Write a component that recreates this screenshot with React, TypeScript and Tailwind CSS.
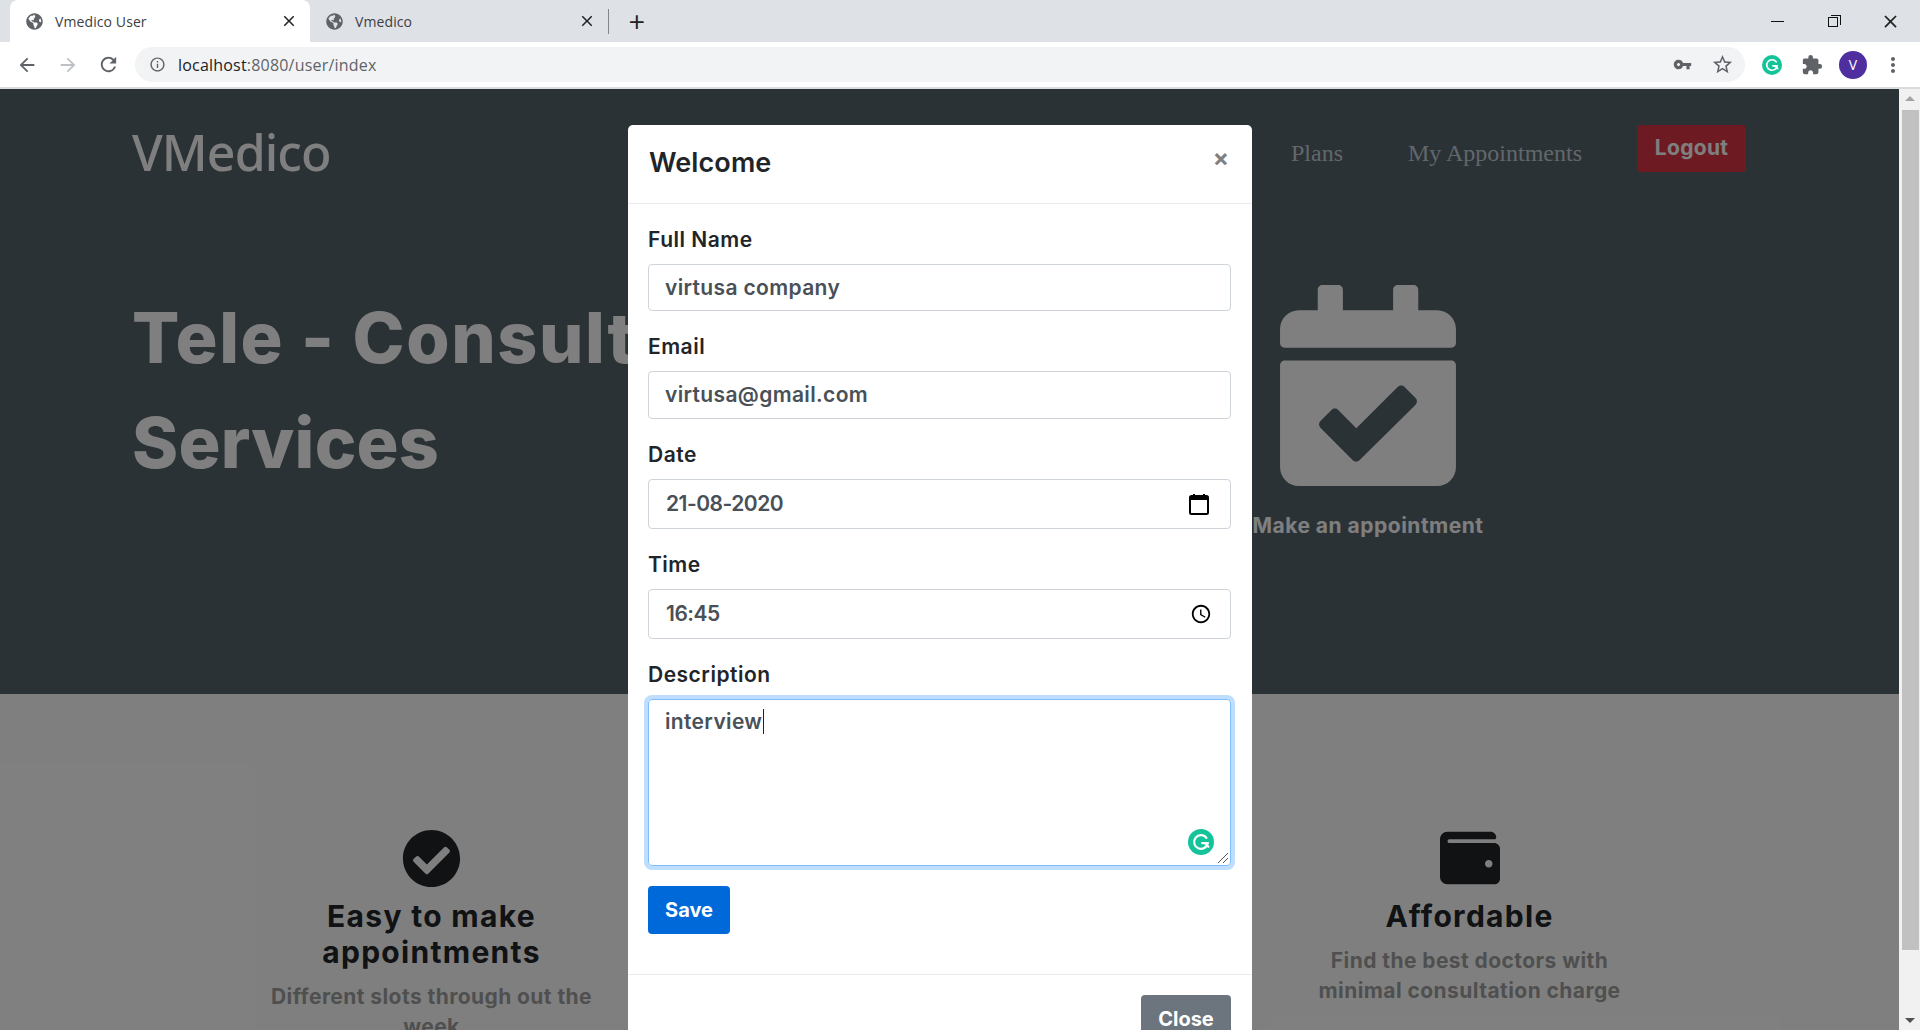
import React from "react";
import { FaCalendarCheck, FaCheckCircle, FaGlobeAmericas, FaWallet } from "react-icons/fa";
import {
  MdAccessTime,
  MdArrowBack,
  MdArrowForward,
  MdClose,
  MdExtension,
  MdInfoOutline,
  MdMoreVert,
  MdRefresh,
  MdStarBorder,
  MdVpnKey,
} from "react-icons/md";

function GrammarlyG({ size }: { size: number }) {
  return (
    <svg width={size} height={size} viewBox="0 0 24 24" className="shrink-0">
      <circle cx="12" cy="12" r="12" fill="#15c39a" />
      <path d="M17 8.2A6.3 6.3 0 1 0 18.2 13H13" fill="none" stroke="#fff" strokeWidth="2" strokeLinecap="round" />
      <path d="M15.6 13l3.2 3.4" fill="none" stroke="#fff" strokeWidth="2" strokeLinecap="round" />
    </svg>
  );
}

function Tab({ title, active, width }: { title: string; active?: boolean; width: string }) {
  return (
    <div className={`flex h-[42px] items-center pl-4 pr-3 ${width} ${active ? "rounded-t-lg bg-white" : ""}`}>
      <FaGlobeAmericas className="shrink-0 text-[17px] text-[#5f6368]" />
      <span className="ml-[12px] flex-1 font-['Open_Sans',sans-serif] text-[14px] tracking-[0.1px] text-[#3c4043]">{title}</span>
      <MdClose className="shrink-0 text-[18px] text-[#202124]" />
    </div>
  );
}

function BrowserChrome() {
  return (
    <div className="flex shrink-0 flex-col">
      <div className="flex h-[42px] items-center bg-[#dee1e6] pl-[10px]">
        <Tab title="Vmedico User" active width="w-[300px]" />
        <Tab title="Vmedico" width="w-[298px]" />
        <div className="h-[25px] w-px bg-[#80868b]" />
        <span className="mt-[-2px] ml-[18px] text-[30px] leading-none font-light text-[#202124]">+</span>
        <div className="ml-auto flex items-center pr-[19px]">
          <div className="h-px w-[13px] bg-[#111]" />
          <div className="relative ml-[44px] h-[13px] w-[13px]">
            <div className="absolute top-[2px] left-0 h-[10px] w-[10px] border border-[#111] bg-[#dee1e6]" />
            <div className="absolute top-0 right-0 h-[10px] w-[10px] border-t border-r border-[#111]" />
          </div>
          <MdClose className="ml-[39px] text-[21px] font-light text-[#222]" />
        </div>
      </div>
      <div className="flex h-[47px] items-center border-b-2 border-[#dadce0] bg-white">
        <MdArrowBack className="ml-[16px] text-[22px] text-[#5f6368]" />
        <MdArrowForward className="ml-[19px] text-[22px] text-[#bdc1c6]" />
        <MdRefresh className="ml-[18px] text-[23px] text-[#5f6368]" />
        <div className="ml-[15px] flex h-[35px] w-[1610px] items-center rounded-full bg-[#f1f3f4] pl-[14px]">
          <MdInfoOutline className="text-[17px] text-[#5f6368]" />
          <span className="ml-[12px] font-['Open_Sans',sans-serif] text-[16px] tracking-[0.2px] text-[#202124]">
            localhost<span className="text-[#5f6368]">:8080/user/index</span>
          </span>
          <MdVpnKey className="ml-auto text-[19px] text-[#5f6368]" />
          <MdStarBorder className="mr-[11px] ml-[19px] text-[23px] text-[#5f6368]" />
        </div>
        <div className="ml-[17px]"><GrammarlyG size={20} /></div>
        <MdExtension className="ml-[19px] text-[22px] text-[#5f6368]" />
        <div className="ml-[16px] flex h-[28px] w-[28px] items-center justify-center rounded-full bg-[#4f2ea0] font-['Open_Sans',sans-serif] text-[14px] text-white">V</div>
        <MdMoreVert className="ml-[14px] text-[24px] text-[#5f6368]" />
      </div>
    </div>
  );
}

function Feature({ icon, title, text }: { icon: React.ReactNode; title: React.ReactNode; text: React.ReactNode }) {
  return (
    <div className="flex flex-col items-center pt-[134px] text-center">
      <div className="flex h-[60px] items-center">{icon}</div>
      <h3 className="mt-[10px] text-[30px] leading-[36px] font-bold tracking-[1.3px] whitespace-nowrap text-[#212529]">{title}</h3>
      <p className="mt-[12px] text-[21px] leading-[30px] font-bold tracking-[0.43px] whitespace-nowrap text-[#9f9f9f]">{text}</p>
    </div>
  );
}

function Page() {
  return (
    <div className="h-full flex-1 overflow-hidden bg-white">
      <section className="h-[605px] bg-[#56646c] pl-[132px] text-white">
        <div className="flex h-[126px] items-center">
          <span className="w-[1159px] shrink-0 font-['Noto_Sans',sans-serif] text-[50px] font-medium tracking-[-0.9px]">VMedico</span>
          <nav className="flex items-center font-['Liberation_Serif',serif] text-[24px] text-[#c4ced6]">
            <span className="mt-[1px]">Plans</span>
            <span className="mt-[1px] ml-[65px] whitespace-nowrap">My Appointments</span>
          </nav>
          <span className="mt-[-8px] ml-[55px] flex h-[47px] w-[109px] items-center justify-center rounded-[4px] bg-[#dc3545] text-[21px] font-bold tracking-[0.3px]">Logout</span>
        </div>
        <div className="flex">
          <h1 className="mt-[70px] w-[1100px] text-[70px] leading-[105px] font-extrabold tracking-[0.2px]">
            <span className="tracking-[1.6px]">Tele - Consultation</span>
            <br />
            Services
          </h1>
          <div className="mt-[70px] ml-[20px] flex w-[232px] flex-col items-center">
            <FaCalendarCheck className="h-[201px] w-[176px]" />
            <span className="mt-[27px] text-[21px] leading-[26px] font-bold tracking-[0.5px] whitespace-nowrap">Make an appointment</span>
          </div>
        </div>
      </section>
      <section className="grid grid-cols-3 pr-[170px] pl-[172px]">
        <Feature
          icon={<FaCheckCircle className="text-[59px] text-[#212529]" />}
          title={<>Easy to make<br />appointments</>}
          text={<>Different slots through out the<br />week</>}
        />
        <div />
        <Feature
          icon={<FaWallet className="text-[60px] text-[#212529]" />}
          title="Affordable"
          text={<>Find the best doctors with<br />minimal consultation charge</>}
        />
      </section>
    </div>
  );
}

function Field({ label, className, value, valueClass, icon }: { label: string; className: string; value: string; valueClass?: string; icon?: React.ReactNode }) {
  return (
    <div className="flex flex-col">
      <label className="h-[24px] text-[21px] leading-[26px] font-semibold tracking-[0.5px] text-[#212529]">{label}</label>
      <div className={`mt-[13px] flex items-center rounded-[4px] border border-[#ced4da] pr-[15px] pl-[15px] text-[21px] font-semibold tracking-[0.35px] text-[#495057] ${className}`}>
        <span className={valueClass}>{value}</span>
        {icon}
      </div>
    </div>
  );
}

function Modal() {
  return (
    <div className="absolute top-[36px] left-[628px] w-[624px] rounded-t-[5px] bg-white">
      <div className="flex h-[79px] items-start justify-between border-b border-[#e9ecef] pr-[23px] pl-[21px]">
        <h2 className="mt-[21px] text-[27px] leading-[34px] font-semibold tracking-[0.1px] text-[#212529]">Welcome</h2>
        <span className="mt-[18px] text-[24px] leading-[30px] font-bold text-[#808080]">×</span>
      </div>
      <div className="flex flex-col pt-[23px] pr-[21px] pb-[20px] pl-[20px]">
        <div className="flex flex-col gap-[23px]">
          <Field label="Full Name" className="h-[47px]" valueClass="ml-[1px]" value="virtusa company" />
          <Field label="Email" className="h-[48px]" valueClass="ml-[1px]" value="virtusa@gmail.com" />
          <Field
            label="Date"
            className="h-[50px]"
            valueClass="ml-[2px] tracking-[-0.5px]"
            value="21-08-2020"
            icon={
              <svg width="20" height="22" viewBox="0 0 20 22" className="mr-[6px] ml-auto">
                <path d="M5 1v3M15 1v3" stroke="#000" strokeWidth="2" />
                <rect x="1" y="3" width="18" height="18" rx="1.5" fill="none" stroke="#000" strokeWidth="2" />
                <rect x="1" y="3" width="18" height="4" fill="#000" />
              </svg>
            }
          />
          <Field label="Time" className="h-[50px]" valueClass="ml-[2px] tracking-[-0.5px]" value="16:45" icon={<MdAccessTime className="mr-[3px] ml-auto text-[22px] text-black" />} />
        </div>
        <label className="mt-[23px] h-[24px] text-[21px] leading-[26px] font-semibold tracking-[0.5px] text-[#212529]">Description</label>
        <div className="relative mt-[13px] h-[167px] rounded-[4px] border border-[#80bdff] pt-[7px] pr-[15px] pl-[16px] text-[21px] leading-[30px] font-semibold tracking-[0.35px] text-[#495057] shadow-[0_0_0_4px_#bfdeff]">
          <span className="border-r border-[#222] pr-px">interview</span>
          <div className="absolute right-[16px] bottom-[10px]"><GrammarlyG size={26} /></div>
          <svg width="12" height="12" viewBox="0 0 12 12" className="absolute right-[1px] bottom-[1px]">
            <path d="M1 11L11 1M6 11l5-5" stroke="#555" strokeWidth="1" />
          </svg>
        </div>
        <button className="mt-[20px] h-[48px] w-[82px] rounded-[4px] bg-[#0069d9] text-[20px] font-bold text-white">Save</button>
        <div className="mt-[40px] mr-[-21px] ml-[-20px] border-t border-[#e9ecef]" />
        <button className="mt-[20px] ml-auto h-[48px] w-[90px] rounded-[4px] bg-[#6c757d] text-[20px] font-bold text-white">Close</button>
      </div>
    </div>
  );
}

function Scrollbar() {
  return (
    <div className="relative flex h-full w-[21px] shrink-0 flex-col items-center bg-[#f1f1f1]">
      <div className="mt-[7px] h-0 w-0 border-x-[5px] border-b-[5px] border-x-transparent border-b-[#a3a3a3]" />
      <div className="mt-[9px] ml-[1px] h-[840px] w-[17px] bg-[#c1c1c1]" />
      <div className="mt-auto mb-[7px] h-0 w-0 border-x-[5px] border-t-[5px] border-x-transparent border-t-[#505050]" />
    </div>
  );
}

export default function App() {
  return (
    <div className="flex h-[1030px] w-[1920px] flex-col overflow-hidden bg-white font-['Inter',sans-serif]">
      <BrowserChrome />
      <div className="flex h-[941px] min-h-0">
        <div className="relative h-full flex-1 overflow-hidden">
          <Page />
          <div className="absolute inset-0 bg-black/50" />
          <Modal />
        </div>
        <Scrollbar />
      </div>
    </div>
  );
}
